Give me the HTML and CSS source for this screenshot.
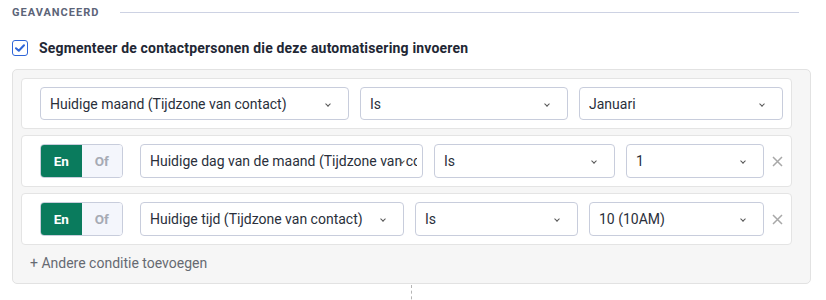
FILE: index.html
```html
<!DOCTYPE html>
<html>
<head>
    <link rel="stylesheet" href="styles.css">
</head>
<body>
    <div class="section">
        <div class="section-head">
            <span class="section-title">Geavanceerd</span>
            <span class="section-rule"></span>
        </div>
        <label class="segment-check">
            <span class="checkbox">
                <svg width="10" height="8" viewBox="0 0 10 8"><path d="M1 4.2 L3.8 6.8 L9 1.2" fill="none" stroke="#2f66d8" stroke-width="2" stroke-linecap="round" stroke-linejoin="round"/></svg>
            </span>
            <span class="segment-label">Segmenteer de contactpersonen die deze automatisering invoeren</span>
        </label>
        <div class="conditions">
            <div class="condition-row">
                <div class="select field-month"><span class="select-text">Huidige maand (Tijdzone van contact)</span><span class="chevron"></span></div>
                <div class="select field-op-month"><span class="select-text">Is</span><span class="chevron"></span></div>
                <div class="select field-grow"><span class="select-text">Januari</span><span class="chevron"></span></div>
            </div>
            <div class="condition-row tall">
                <div class="toggle">
                    <span class="toggle-opt active">En</span>
                    <span class="toggle-opt">Of</span>
                </div>
                <div class="select field-day"><span class="select-text">Huidige dag van de maand (Tijdzone van contact)</span><span class="chevron"></span></div>
                <div class="select field-op-day"><span class="select-text">Is</span><span class="chevron"></span></div>
                <div class="select field-grow"><span class="select-text">1</span><span class="chevron"></span></div>
                <span class="remove">
                    <svg width="11" height="11" viewBox="0 0 11 11"><path d="M1 1 L10 10 M10 1 L1 10" stroke="#a8a8a8" stroke-width="1.5"/></svg>
                </span>
            </div>
            <div class="condition-row tall">
                <div class="toggle">
                    <span class="toggle-opt active">En</span>
                    <span class="toggle-opt">Of</span>
                </div>
                <div class="select field-time"><span class="select-text">Huidige tijd (Tijdzone van contact)</span><span class="chevron"></span></div>
                <div class="select field-op-time"><span class="select-text">Is</span><span class="chevron"></span></div>
                <div class="select field-grow"><span class="select-text">10 (10AM)</span><span class="chevron"></span></div>
                <span class="remove">
                    <svg width="11" height="11" viewBox="0 0 11 11"><path d="M1 1 L10 10 M10 1 L1 10" stroke="#a8a8a8" stroke-width="1.5"/></svg>
                </span>
            </div>
            <div class="add-condition">+ Andere conditie toevoegen</div>
        </div>
        <div class="connector"></div>
    </div>
</body>
</html>
```
FILE: styles.css
```css
body {
    margin: 0;
    background-color: #fff;
    font-family: Roboto, "Noto Sans", sans-serif;
    color: #272d3b;
}
.section {
    padding: 0 15px 0 12px;
}
.section-head {
    display: flex;
    align-items: center;
    height: 24px;
}
.section-title {
    font-size: 11px;
    font-weight: 700;
    text-transform: uppercase;
    letter-spacing: 1px;
    color: #5c6478;
}
.section-rule {
    flex: 1;
    height: 1px;
    background-color: #cdd2e3;
    margin: 0 12px 0 21px;
}
.segment-check {
    display: flex;
    align-items: center;
    margin-top: 16px;
    height: 16px;
}
.checkbox {
    width: 16px;
    height: 16px;
    box-sizing: border-box;
    border: 1.5px solid #2f66d8;
    border-radius: 3px;
    display: flex;
    align-items: center;
    justify-content: center;
}
.segment-label {
    margin-left: 11px;
    font-size: 14px;
    font-weight: 700;
    letter-spacing: 0.18px;
    color: #222734;
}
.conditions {
    margin-top: 13px;
    background-color: #f6f6f6;
    border: 1px solid #e2e2e2;
    border-radius: 5px;
    padding: 8px 18px 10px 8px;
    display: flex;
    flex-direction: column;
    gap: 6px;
}
.condition-row {
    background-color: #fff;
    border: 1px solid #e4e4e4;
    border-radius: 4px;
    padding: 8px 8px 8px 18px;
    display: flex;
    align-items: center;
    gap: 11px;
}
.select {
    position: relative;
    height: 33px;
    box-sizing: border-box;
    border: 1px solid #c8cddc;
    border-radius: 4px;
    background-color: #fff;
    display: flex;
    align-items: center;
    padding: 0 5px 0 9px;
    font-size: 14px;
    color: #2a2f3b;
}
.tall .select {
    height: 34px;
}
.select-text {
    white-space: nowrap;
    overflow: hidden;
}
.chevron {
    position: absolute;
    right: 18px;
    top: 50%;
    width: 3px;
    height: 3px;
    margin-top: -2px;
    border-right: 1.2px solid #555;
    border-bottom: 1.2px solid #555;
    transform: rotate(45deg);
}
.field-month { width: 309px; }
.field-op-month { width: 208px; }
.field-day { width: 283px; }
.field-op-day { width: 181px; }
.field-time { width: 264px; }
.field-op-time { width: 163px; }
.field-grow { flex: 1; }
.toggle {
    display: flex;
    width: 83px;
    height: 34px;
    box-sizing: border-box;
    border: 1px solid #c8cddc;
    border-radius: 4px;
    overflow: hidden;
    margin-right: 6px;
}
.toggle-opt {
    flex: 1;
    display: flex;
    align-items: center;
    justify-content: center;
    font-size: 13.5px;
    font-weight: 700;
    background-color: #f4f6fc;
    color: #a6aab4;
}
.toggle-opt.active {
    background-color: #0a7b5d;
    color: #fff;
}
.remove {
    display: flex;
    margin-left: -3px;
}
.add-condition {
    margin-top: 2px;
    padding-left: 9px;
    height: 20px;
    line-height: 20px;
    font-size: 14px;
    color: #666a72;
}
.connector {
    width: 0;
    height: 20px;
    margin: 1px auto 0;
    border-left: 1px dashed #b5b5b5;
}
```
